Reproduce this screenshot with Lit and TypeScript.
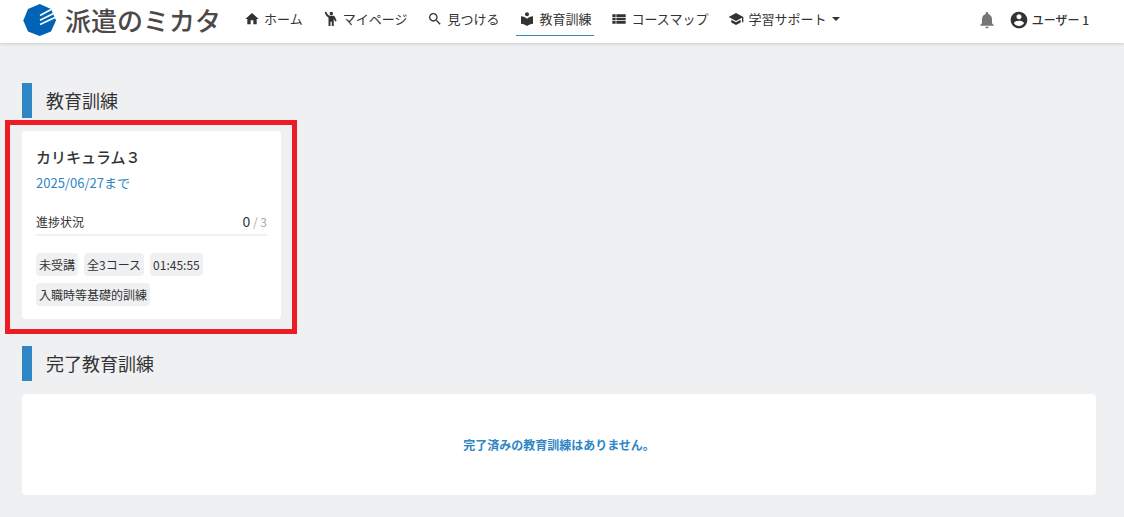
import { LitElement, html, css, svg } from "lit";
import { customElement } from "lit/decorators.js";

const ICONS = {
  home: "M10 20v-6h4v6h5v-8h3L12 3 2 12h3v8z",
  search: "M15.5 14h-.79l-.28-.27C15.41 12.59 16 11.11 16 9.5 16 5.91 13.09 3 9.5 3S3 5.91 3 9.5 5.91 16 9.5 16c1.61 0 3.09-.59 4.23-1.57l.27.28v.79l5 4.99L20.49 19l-4.99-5zm-6 0C7.01 14 5 11.99 5 9.5S7.01 5 9.5 5 14 7.01 14 9.5 11.99 14 9.5 14z",
  person: "M12.5 1a2.6 2.6 0 1 0 0 5.2 2.6 2.6 0 0 0 0-5.2zM5.2 1.2 2.6 1.8C3.2 5.2 5 8 8.3 9.6V22.5h2.9V16h2v6.5h2.9V11.4l2 4.2 2.4-1.1-2.6-5.4C17.2 7.6 16.300 7 14.800 7H10.500C7.600 6.500 5.800 4.300 5.200 1.200z",
  book: "M12 11.55C9.64 9.35 6.48 8 3 8v11c3.48 0 6.64 1.35 9 3.55 2.36-2.19 5.52-3.55 9-3.55V8c-3.48 0-6.64 1.35-9 3.55zM12 8c1.66 0 3-1.34 3-3s-1.34-3-3-3-3 1.34-3 3 1.34 3 3 3z",
  list: "M2 14h5v-4H2v4zm0 5h5v-4H2v4zM2 9h5V5H2v4zm6 5h14v-4H8v4zm0 5h14v-4H8v4zM8 5v4h14V5H8z",
  school: "M5 13.18v4L12 21l7-3.82v-4L12 17l-7-3.82zM12 3L1 9l11 6 9-4.91V17h2V9L12 3z",
  bell: "M12 22c1.1 0 2-.9 2-2h-4c0 1.1.89 2 2 2zm6-6v-5c0-3.07-1.64-5.64-4.5-6.32V4c0-.83-.67-1.5-1.5-1.5s-1.5.67-1.5 1.5v.68C7.63 5.36 6 7.92 6 11v5l-2 2v1h16v-1l-2-2z",
  account: "M12 2C6.48 2 2 6.48 2 12s4.48 10 10 10 10-4.48 10-10S17.52 2 12 2zm0 3c1.66 0 3 1.34 3 3s-1.34 3-3 3-3-1.34-3-3 1.34-3 3-3zm0 14.2c-2.5 0-4.71-1.28-6-3.22.03-1.99 4-3.08 6-3.08 1.99 0 5.97 1.09 6 3.08-1.29 1.94-3.5 3.22-6 3.22z",
};

const icon = (name: keyof typeof ICONS, cls = "icon") =>
  html`<svg class=${cls} viewBox="0 0 24 24" aria-hidden="true">${svg`<path d=${ICONS[name]} />`}</svg>`;

const NAV: { icon: keyof typeof ICONS; label: string; active?: boolean }[] = [
  { icon: "home", label: "ホーム" },
  { icon: "person", label: "マイページ" },
  { icon: "search", label: "見つける" },
  { icon: "book", label: "教育訓練", active: true },
  { icon: "list", label: "コースマップ" },
];

const TAGS = ["未受講", "全3コース", "01:45:55", "入職時等基礎的訓練"];

@customElement("app-root")
export class AppRoot extends LitElement {
  static styles = css`
    :host {
      display: block;
      min-height: 100vh;
      background: #eff0f2;
      color: #333;
      font-family: "Noto Sans CJK JP", "Noto Sans", sans-serif;
      font-size: 13px;
      line-height: 20px;
    }
    * { box-sizing: border-box; }
    h1, h2, h3, p, ul { margin: 0; padding: 0; }
    a { color: inherit; text-decoration: none; }
    button {
      font: inherit;
      color: inherit;
      background: none;
      border: 0;
      padding: 0;
      cursor: pointer;
    }
    svg { display: block; flex: none; fill: currentColor; }
    header {
      display: flex;
      align-items: center;
      height: 43px;
      padding: 0 35px 4px 23px;
      background: #fff;
      box-shadow: 0 1px 3px rgba(0, 0, 0, 0.15);
    }
    .brand {
      display: flex;
      align-items: center;
      gap: 8px;
      color: #4c4948;
      font-size: 26px;
      line-height: 32px;
      font-weight: 500;
      white-space: nowrap;
    }
    .mark { width: 34px; height: 34px; }
    nav { display: flex; gap: 14px; margin-left: 20px; }
    .item {
      display: flex;
      align-items: center;
      gap: 4px;
      height: 32px;
      padding: 0 3px;
      border-bottom: 1px solid transparent;
      white-space: nowrap;
    }
    .item.active { border-color: #2e86c5; }
    .icon { width: 16px; height: 16px; }
    .caret { width: 8px; height: 4px; margin-left: 2px; }
    .tools { display: flex; align-items: center; gap: 12px; margin-left: auto; }
    .bell { width: 20px; height: 20px; color: #757575; }
    .account { width: 20px; height: 20px; }
    .user {
      display: flex;
      align-items: center;
      gap: 3px;
      font-size: 12px;
      font-weight: 500;
      white-space: nowrap;
    }
    main { padding: 40px 28px 22px 22px; }
    h2 {
      border-left: 10px solid #2e86c5;
      padding: 0 0 1px 14px;
      font-size: 18px;
      line-height: 34px;
      font-weight: 400;
      margin-bottom: 13px;
    }
    .panel { background: #fff; border-radius: 4px; }
    .courses { display: flex; margin-bottom: 27px; }
    .course { position: relative; width: 259px; padding: 14px 14px 13px; }
    .course::after {
      content: "";
      position: absolute;
      inset: -11px -16px -15px -17px;
      border: 5px solid #ed1c24;
      pointer-events: none;
    }
    h3 { font-size: 15px; line-height: 24px; font-weight: 500; }
    .due { margin-top: 1px; color: #2e86c5; line-height: 26px; }
    .progress {
      display: flex;
      justify-content: space-between;
      align-items: baseline;
      margin-top: 14px;
      padding-bottom: 1px;
      border-bottom: 2px solid #eff0f2;
      font-size: 12px;
      line-height: 22px;
    }
    .done { font-size: 14px; }
    .total { color: #aaa; }
    .tags { display: flex; flex-wrap: wrap; gap: 7px 6px; margin-top: 17px; list-style: none; }
    .tag {
      padding: 0 3px;
      border-radius: 4px;
      background: #eff0f2;
      font-size: 12px;
      line-height: 23px;
    }
    .empty {
      padding: 40px 14px;
      color: #2e86c5;
      font-size: 12px;
      line-height: 21px;
      font-weight: 700;
      text-align: center;
    }
  `;

  render() {
    return html`
      <header>
        <a class="brand" href="#">
          <svg class="mark" viewBox="0 0 34 34" aria-hidden="true">
            <path fill="#0063b6" d="M16.700 1 28 6 33 17.500 28 28.500 16.700 33 5 28.500.3 17.500 5 6z" />
            <path stroke="#fff" stroke-width="1.700" d="M17 12.500 28 6.500M17 17.200 31.500 10M17 21.500 33 14" />
          </svg>
          <span>派遣のミカタ</span>
        </a>
        <nav>
          ${NAV.map(
            (n) => html`<a class="item ${n.active ? "active" : ""}" href="#">${icon(n.icon)}<span>${n.label}</span></a>`
          )}
          <button class="item" type="button">
            ${icon("school")}<span>学習サポート</span>
            <svg class="caret" viewBox="0 0 8 4" aria-hidden="true"><path d="M0 0h8L4 4z" /></svg>
          </button>
        </nav>
        <div class="tools">
          <button type="button" aria-label="通知">${icon("bell", "bell")}</button>
          <button class="user" type="button">${icon("account", "account")}<span>ユーザー 1</span></button>
        </div>
      </header>
      <main>
        <section>
          <h2>教育訓練</h2>
          <div class="courses">
            <article class="panel course">
              <h3>カリキュラム３</h3>
              <p class="due">2025/06/27まで</p>
              <div class="progress">
                <span>進捗状況</span>
                <span><span class="done">0</span><span class="total"> / 3</span></span>
              </div>
              <ul class="tags">
                ${TAGS.map((t) => html`<li class="tag">${t}</li>`)}
              </ul>
            </article>
          </div>
        </section>
        <section>
          <h2>完了教育訓練</h2>
          <p class="panel empty">完了済みの教育訓練はありません。</p>
        </section>
      </main>
    `;
  }
}
